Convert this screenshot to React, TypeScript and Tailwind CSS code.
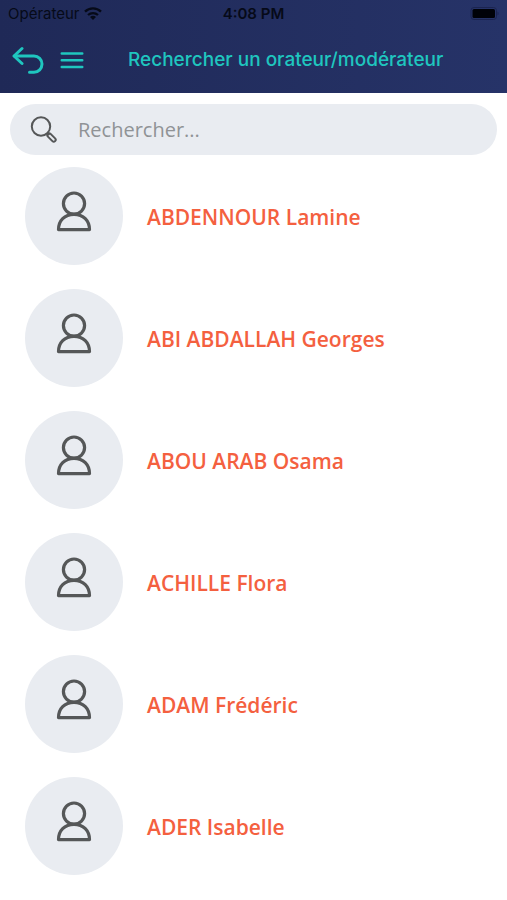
const speakers = [
  "ABDENNOUR Lamine",
  "ABI ABDALLAH Georges",
  "ABOU ARAB Osama",
  "ACHILLE Flora",
  "ADAM Frédéric",
  "ADER Isabelle",
];

function WifiIcon() {
  return (
    <svg width="18" height="14" viewBox="0 0 18 14" fill="none" stroke="#060a18" aria-hidden="true">
      <path d="M1 4.6a11.6 11.6 0 0 1 16 0" strokeWidth="2.4" />
      <path d="M4 8a7.4 7.4 0 0 1 10 0" strokeWidth="2.3" />
      <path d="M9 13 6 10.1a4.4 4.4 0 0 1 6 0z" fill="#060a18" stroke="none" />
    </svg>
  );
}

function BatteryIcon() {
  return (
    <svg width="30" height="14" viewBox="0 0 30 14" aria-hidden="true">
      <rect x="2" y="0.5" width="25.5" height="12" rx="3" fill="none" stroke="#1b2450" />
      <rect x="3.5" y="2" width="22.5" height="9" rx="1.5" fill="#000208" />
      <path d="M28.5 4.5c1.4.6 1.4 3.4 0 4z" fill="#1b2450" />
    </svg>
  );
}

function BackIcon() {
  return (
    <svg
      width="32"
      height="30"
      viewBox="0 0 32 30"
      fill="none"
      stroke="currentColor"
      strokeWidth="3"
      strokeLinecap="round"
      strokeLinejoin="round"
      aria-hidden="true"
    >
      <path d="M10 2.500 2 10l8 7.500" />
      <path d="M2.500 10H22a8 8.100 0 0 1 0 16.200H17.500" />
    </svg>
  );
}

function MenuIcon() {
  return (
    <svg width="24" height="18" viewBox="0 0 24 18" fill="none" stroke="currentColor" strokeWidth="2.4" strokeLinecap="round" aria-hidden="true">
      <path d="M1.7 1.500h20.600M1.700 8.300h20.600M1.700 15h20.600" />
    </svg>
  );
}

function SearchIcon() {
  return (
    <svg width="28" height="28" viewBox="0 0 28 28" fill="none" stroke="#555758" strokeWidth="2" aria-hidden="true">
      <circle cx="11" cy="10.500" r="9.200" />
      <path d="m17.400 17 2 2" />
      <path d="m17.900 20.600 4.500 4.500a1.900 1.900 0 0 0 2.700-2.700l-4.500-4.500a1.900 1.900 0 0 0-2.700 2.700z" />
    </svg>
  );
}

function PersonIcon() {
  return (
    <svg width="36" height="42" viewBox="0 0 36 42" fill="none" stroke="#555758" strokeWidth="3.2" strokeLinejoin="round" aria-hidden="true">
      <circle cx="18" cy="12.600" r="10.600" />
      <path d="M2.500 38.600h31c0-9-6-15.300-15.500-15.300S2.500 29.600 2.500 38.600z" />
    </svg>
  );
}

export default function App() {
  return (
    <div className="min-h-screen bg-white font-['Open_Sans',sans-serif]">
      <header className="bg-linear-to-r from-[#1f2957] to-[#263368]">
        <div className="grid h-7 grid-cols-3 items-center px-2 font-['Inter',sans-serif] text-[15px] text-[#060a18]">
          <div className="flex items-center gap-1">
            <span>Opérateur</span>
            <WifiIcon />
          </div>
          <span className="text-center font-semibold">4:08 PM</span>
          <div className="flex justify-end">
            <BatteryIcon />
          </div>
        </div>
        <div className="flex h-[65px] items-center gap-4 px-3 text-[#1fc6bf]">
          <button type="button" aria-label="Retour">
            <BackIcon />
          </button>
          <button type="button" aria-label="Menu">
            <MenuIcon />
          </button>
          <h1 className="flex-1 pl-7 font-['Inter',sans-serif] text-[19px] font-medium">
            Rechercher un orateur/modérateur
          </h1>
        </div>
      </header>
      <main>
        <label className="mx-2.5 mt-[11px] flex h-[51px] items-center gap-5 rounded-full bg-[#e9ecf1] px-5">
          <SearchIcon />
          <input
            type="search"
            aria-label="Rechercher"
            placeholder="Rechercher..."
            className="min-w-0 flex-1 bg-transparent text-xl text-[#555758] outline-none placeholder:text-[#909396]"
          />
        </label>
        <ul className="mt-3 flex flex-col gap-6 px-[25px]">
          {speakers.map((name) => (
            <li key={name}>
              <a href="#" className="flex items-center gap-6">
                <span className="flex size-[98px] shrink-0 items-center justify-center rounded-full bg-[#e9ecf1] pb-2">
                  <PersonIcon />
                </span>
                <span className="pt-0.5 text-[21px] leading-7 font-semibold text-[#f4603f]">{name}</span>
              </a>
            </li>
          ))}
        </ul>
      </main>
    </div>
  );
}
